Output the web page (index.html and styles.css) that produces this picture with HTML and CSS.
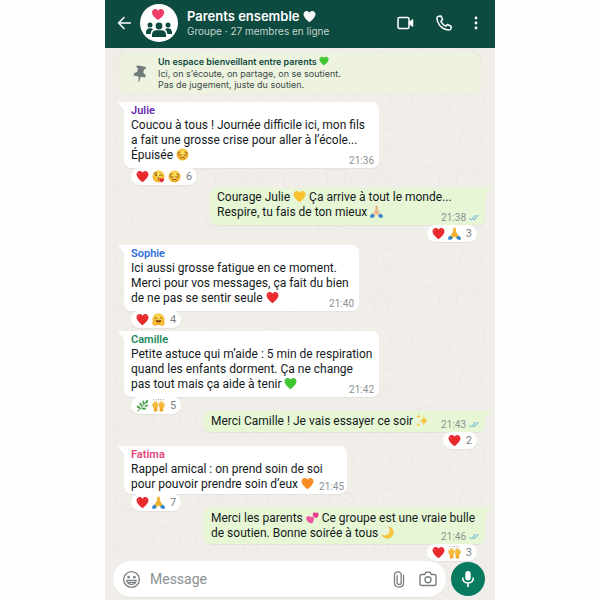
FILE: index.html
```html
<!DOCTYPE html>
<html lang="fr">
<head>
    <meta charset="UTF-8">
    <meta name="viewport" content="width=device-width, initial-scale=1.0">
    <title>Parents ensemble</title>
    <link rel="stylesheet" href="styles.css">
</head>
<body>

    <!-- Emoji and icon sprite -->
    <svg class="sprite" aria-hidden="true">
        <defs>
            <radialGradient id="face" cx="50%" cy="35%" r="65%">
                <stop offset="0" stop-color="#ffe45c"/>
                <stop offset="1" stop-color="#f5a623"/>
            </radialGradient>
            <linearGradient id="hand" x1="0" y1="0" x2="0" y2="1">
                <stop offset="0" stop-color="#ffd54a"/>
                <stop offset="1" stop-color="#f0a020"/>
            </linearGradient>
        </defs>
        <symbol id="heart" viewBox="0 0 24 24">
            <path fill="currentColor" d="M12 22.500C8 19.500 1 14 1 8c0-3.600 2.600-6 5.800-6 2.200 0 4.200 1.200 5.200 3.200C13 3.200 15 2 17.200 2 20.400 2 23 4.400 23 8c0 6-7 11.500-11 14.500z"/>
            <path fill="#fff" opacity=".25" d="M3.500 8c0-2.500 1.800-3.800 3.700-3.500C5.500 5.500 4.800 7.500 5 10c-.8.200-1.500-.8-1.500-2zM15 5.500c2-1.500 4.500-1 5 1-1.500-.8-3.300-.8-5-1z"/>
        </symbol>
        <symbol id="pensive" viewBox="0 0 24 24">
            <circle cx="12" cy="12" r="11" fill="url(#face)"/>
            <path d="M3.500 9.500l4-2M20.500 9.500l-4-2M4.500 12.500q2.500 2 5 .5M19.500 12.500q-2.500 2-5 .5M8.500 18q3.500-2 7 0" fill="none" stroke="#6d4212" stroke-width="1.500" stroke-linecap="round"/>
        </symbol>
        <symbol id="kiss" viewBox="0 0 24 24">
            <circle cx="12" cy="12" r="11" fill="url(#face)"/>
            <ellipse cx="7.500" cy="9.500" rx="1.500" ry="2" fill="#6d4212"/>
            <path d="M4.500 6q2-2 4-1M14 9.500q2-2 4.500 0M11 13.500q3 .5 1.500 2.300q2 1.200-1 2.700" fill="none" stroke="#6d4212" stroke-width="1.500" stroke-linecap="round"/>
            <path fill="#e5253b" d="M18 23c-3-1.500-4.800-4-4-6.200.8-1.800 3-1.800 4-.3 1.200-1.300 3.600-1 4.200.8.700 2.300-1.500 4.500-4.200 5.700z"/>
        </symbol>
        <symbol id="hug" viewBox="0 0 24 24">
            <circle cx="12" cy="11.500" r="11" fill="url(#face)"/>
            <path d="M6 9.500q1.500-2.500 3.500 0M14.500 9.500q1.500-2.500 3.500 0" fill="none" stroke="#6d4212" stroke-width="1.500" stroke-linecap="round"/>
            <path d="M6.500 12.500q5.500 2 11 0q-1 5-5.500 5t-5.500-5z" fill="#80420f"/>
            <path d="M1 17q2-3 3.500-.5Q8 15 8.500 18q2 3-1.500 5Q1 24 1 17zM23 17q-2-3-3.500-.5Q16 15 15.500 18q-2 3 1.500 5Q23 24 23 17z" fill="#ffcb3d" stroke="#df8a12" stroke-width="1"/>
        </symbol>
        <symbol id="herb" viewBox="0 0 24 24">
            <path d="M2.500 22.500Q9 19 13 12.500T20 4" fill="none" stroke="#2e7d32" stroke-width="1.500"/>
            <path fill="#43a047" d="M22 1q1 6-4 8-3-4 4-8zM13 2q4 4 2 8.500-5-2-2-8.500zM7 6q5 2 4.500 8Q5 13 7 6zM1.500 12q6 0 7 6Q2 19 1.500 12zM23 11q-3 5-8 2.500Q17 9 23 11zM19 18q-5 4-9-.5 5-4 9 .5z"/>
        </symbol>
        <symbol id="raised" viewBox="0 0 24 24">
            <path d="M4 2L3 .5M8 1.500V0M12 2V0M16 1.500V0M20 2l1-1.500" stroke="#52677a" stroke-width="1.200"/>
            <path fill="url(#hand)" stroke="#e39a1c" stroke-width=".6" d="M3.500 22.500l.5-5Q.5 14 .8 8.500q1.200-1.200 2 0L3.500 12 4 5q1.200-1.200 2 0l.3 5L7.500 4.500q1.300-.9 2 .3L9 11l1.300-2.500q1.400-.4 1.300 1L9.500 17v5.500z"/>
            <path fill="url(#hand)" stroke="#e39a1c" stroke-width=".6" d="M20.500 22.500l-.5-5q3.500-3.500 3.200-9-1.200-1.200-2 0l-.7 3.500L20 5q-1.200-1.200-2 0l-.3 5-1.200-5.500q-1.300-.9-2 .3L15 11l-1.300-2.500q-1.400-.4-1.300 1l2.100 7.500v5.500z"/>
        </symbol>
        <symbol id="pray" viewBox="0 0 24 24">
            <path fill="currentColor" d="M11.700 1q-1.700-.4-2 1.500L8.500 10 4 17l3.500 4 4.200-3zM12.300 1q1.700-.4 2 1.500L15.500 10l4.500 7-3.500 4-4.200-3z"/>
            <path d="M12 1.500V18M9.300 10.500l-.5 4M14.700 10.500l.5 4" fill="none" stroke="#c5852f" stroke-width=".8"/>
            <path fill="#2f86cf" d="M4.500 15.500L9 20l-3 3.500H.5V19zM19.500 15.500L15 20l3 3.500h5.500V19z"/>
        </symbol>
        <symbol id="sparkles" viewBox="0 0 24 24">
            <path fill="#f8c544" d="M14.500 3Q16 11 23 12.500q-7 1.500-8.500 9-1.500-7.500-8.500-9Q13 11 14.500 3zM5 .5Q5.600 4 9 4.500 5.600 5 5 8.500 4.400 5 1 4.500 4.400 4 5 .5zM4 16q.5 3 3.500 3.500Q4.500 20 4 23.500 3.500 20 .5 19.500 3.500 19 4 16z"/>
        </symbol>
        <symbol id="two-hearts" viewBox="0 0 24 24">
            <path fill="#f0559f" d="M11.500 23C6 22.500 0 19 .5 13.500 1 9 6 8 8 11.500c3-3 7.500-.5 7 3.300-.3 2.700-2 5.200-3.500 8.200z"/>
            <path fill="#e83e8c" d="M20 13c-4-.5-8-3-7.500-7C13 2.500 16.500 1.300 17.800 4c2.200-2.300 6-.5 5.500 3-.3 2.200-2 4-3.300 6z"/>
        </symbol>
        <symbol id="moon" viewBox="0 0 24 24">
            <path fill="#fcc63a" stroke="#eda621" stroke-width=".7" d="M14.500 1Q24 5 22.500 14 20 23 11 22.800 4 22 1.500 16.500 8 20 13.500 15.500 19 9.500 14.500 1z"/>
        </symbol>
        <symbol id="ticks" viewBox="0 0 22 14">
            <path d="M1 8l4 4L13 2M9 11l1 1L19 2" fill="none" stroke="#4dabd8" stroke-width="2"/>
        </symbol>
    </svg>

    <div class="phone">
        <header class="topbar">
            <button class="icon-button" type="button" aria-label="Retour">
                <svg class="icon-back" viewBox="0 0 14 14"><path d="M13.500 7H1.500M7 1.500L1.500 7 7 12.500"/></svg>
            </button>
            <div class="avatar">
                <svg viewBox="0 0 38 38" aria-hidden="true">
                    <path fill="#ee3f67" d="M18 16C14.500 13.500 12 11.300 12 8.500c0-3.500 4.200-4.700 6-1.700 1.800-3 6.200-1.800 6.200 1.700 0 2.800-2.600 5-6.200 7.500z"/>
                    <g fill="#0d4a40">
                        <circle cx="10" cy="21" r="2.500"/>
                        <circle cx="28" cy="21" r="2.500"/>
                        <circle cx="19" cy="22" r="3.400"/>
                        <path d="M6 30v-2q.5-4 4.500-3.700 1.500 0 2.500 1Q10.500 27 10.500 30zM32 30v-2q-.5-4-4.500-3.700-1.500 0-2.500 1 2.500 1.700 2.500 4.700zM12 33v-2.500q.5-4.200 4.500-4.200h5q4 0 4.500 4.200V33z"/>
                    </g>
                </svg>
            </div>
            <div class="group">
                <h1 class="group-name">Parents ensemble <svg class="emoji white" role="img" aria-label="cœur"><use href="#heart"/></svg></h1>
                <p class="group-status">Groupe · 27 membres en ligne</p>
            </div>
            <nav class="actions">
                <button class="icon-button" type="button" aria-label="Appel vidéo">
                    <svg class="icon-video" viewBox="0 0 17 14"><rect x="1" y="1.500" width="11" height="11" rx="1.500"/><path fill="#fff" d="M12.500 6.500L15.500 4v6l-3-2.500z"/></svg>
                </button>
                <button class="icon-button" type="button" aria-label="Appel">
                    <svg class="icon-phone" viewBox="0 0 16 16"><path d="M2.600 1.200L5 .9 6.600 4.800 4.900 6.300Q6.500 9.500 9.800 11.200L11.400 9.500 15.200 11.200 15 13.600Q14.600 15.200 12.500 15.100 7.500 14.500 4 10.700 1.200 7.300.9 3.400 1 1.700 2.600 1.200z"/></svg>
                </button>
                <button class="icon-button" type="button" aria-label="Menu">
                    <svg class="icon-more" viewBox="0 0 4 14"><circle cx="2" cy="2" r="1.400"/><circle cx="2" cy="7" r="1.400"/><circle cx="2" cy="12" r="1.400"/></svg>
                </button>
            </nav>
        </header>

        <main class="chat">
            <section class="pinned">
                <svg class="icon-pin" viewBox="0 0 16 20" aria-hidden="true"><path d="M4.500.5l10.500 2-.7 2.500-1.800.2-.7 4 2.700 2.900-.5 2.600-5.300-1L7 19.500l-1-.2.500-5.900-5.700-1.100.5-2.600 3.600-1.700.8-4L4 3z"/></svg>
                <div>
                    <h2 class="pinned-title">Un espace bienveillant entre parents <svg class="emoji small green" role="img" aria-label="cœur vert"><use href="#heart"/></svg></h2>
                    <p>Ici, on s’écoute, on partage, on se soutient.<br>Pas de jugement, juste du soutien.</p>
                </div>
            </section>

            <article class="message received spaced w-julie">
                <h3 class="author julie">Julie</h3>
                <p>Coucou à tous ! Journée difficile ici, mon fils<br>a fait une grosse crise pour aller à l’école...<br>Épuisée <svg class="emoji" role="img" aria-label="pensif"><use href="#pensive"/></svg></p>
                <div class="meta"><time>21:36</time></div>
                <div class="reactions">
                    <svg class="emoji red" role="img" aria-label="cœur"><use href="#heart"/></svg>
                    <svg class="emoji" role="img" aria-label="bisou"><use href="#kiss"/></svg>
                    <svg class="emoji" role="img" aria-label="pensif"><use href="#pensive"/></svg>
                    <span>6</span>
                </div>
            </article>

            <article class="message sent spaced w-courage">
                <p>Courage Julie <svg class="emoji yellow" role="img" aria-label="cœur jaune"><use href="#heart"/></svg> Ça arrive à tout le monde...<br>Respire, tu fais de ton mieux <svg class="emoji light-skin" role="img" aria-label="mains jointes"><use href="#pray"/></svg></p>
                <div class="meta"><time>21:38</time><svg class="ticks" role="img" aria-label="lu"><use href="#ticks"/></svg></div>
                <div class="reactions">
                    <svg class="emoji red" role="img" aria-label="cœur"><use href="#heart"/></svg>
                    <svg class="emoji skin" role="img" aria-label="mains jointes"><use href="#pray"/></svg>
                    <span>3</span>
                </div>
            </article>

            <article class="message received spaced w-sophie">
                <h3 class="author sophie">Sophie</h3>
                <p>Ici aussi grosse fatigue en ce moment.<br>Merci pour vos messages, ça fait du bien<br>de ne pas se sentir seule <svg class="emoji red" role="img" aria-label="cœur"><use href="#heart"/></svg></p>
                <div class="meta"><time>21:40</time></div>
                <div class="reactions">
                    <svg class="emoji red" role="img" aria-label="cœur"><use href="#heart"/></svg>
                    <svg class="emoji" role="img" aria-label="câlin"><use href="#hug"/></svg>
                    <span>4</span>
                </div>
            </article>

            <article class="message received w-julie">
                <h3 class="author camille">Camille</h3>
                <p>Petite astuce qui m’aide : 5 min de respiration<br>quand les enfants dorment. Ça ne change<br>pas tout mais ça aide à tenir <svg class="emoji green" role="img" aria-label="cœur vert"><use href="#heart"/></svg></p>
                <div class="meta"><time>21:42</time></div>
                <div class="reactions">
                    <svg class="emoji" role="img" aria-label="feuilles"><use href="#herb"/></svg>
                    <svg class="emoji" role="img" aria-label="mains levées"><use href="#raised"/></svg>
                    <span>5</span>
                </div>
            </article>

            <article class="message sent compact w-merci">
                <p>Merci Camille ! Je vais essayer ce soir <svg class="emoji" role="img" aria-label="étincelles"><use href="#sparkles"/></svg></p>
                <div class="meta"><time>21:43</time><svg class="ticks" role="img" aria-label="lu"><use href="#ticks"/></svg></div>
                <div class="reactions">
                    <svg class="emoji red" role="img" aria-label="cœur"><use href="#heart"/></svg>
                    <span>2</span>
                </div>
            </article>

            <article class="message received short w-fatima">
                <h3 class="author fatima">Fatima</h3>
                <p>Rappel amical : on prend soin de soi<br>pour pouvoir prendre soin d’eux <svg class="emoji orange" role="img" aria-label="cœur orange"><use href="#heart"/></svg></p>
                <div class="meta"><time>21:45</time></div>
                <div class="reactions">
                    <svg class="emoji red" role="img" aria-label="cœur"><use href="#heart"/></svg>
                    <svg class="emoji skin" role="img" aria-label="mains jointes"><use href="#pray"/></svg>
                    <span>7</span>
                </div>
            </article>

            <article class="message sent compact w-merci">
                <p>Merci les parents <svg class="emoji" role="img" aria-label="deux cœurs"><use href="#two-hearts"/></svg> Ce groupe est une vraie bulle<br>de soutien. Bonne soirée à tous <svg class="emoji" role="img" aria-label="lune"><use href="#moon"/></svg></p>
                <div class="meta"><time>21:46</time><svg class="ticks" role="img" aria-label="lu"><use href="#ticks"/></svg></div>
                <div class="reactions">
                    <svg class="emoji red" role="img" aria-label="cœur"><use href="#heart"/></svg>
                    <svg class="emoji" role="img" aria-label="mains levées"><use href="#raised"/></svg>
                    <span>3</span>
                </div>
            </article>
        </main>

        <form class="composer">
            <div class="field">
                <button class="icon-button" type="button" aria-label="Emoji">
                    <svg class="icon-smile" viewBox="0 0 20 20"><circle cx="10" cy="10" r="8.300"/><circle class="dot" cx="7" cy="7.500" r="1.400"/><circle class="dot" cx="13" cy="7.500" r="1.400"/><path d="M5 11h10q-1 4.200-5 4.200T5 11zM7 13h6"/></svg>
                </button>
                <input class="input" type="text" placeholder="Message" aria-label="Message">
                <button class="icon-button" type="button" aria-label="Joindre">
                    <svg class="icon-clip" viewBox="0 0 12 18"><path d="M10.800 4.500v8q0 4.500-4.800 4.500t-4.800-4.500V4.500Q1.200 1 4.800 1t3.500 3.500v7.700q0 2.100-2.200 2.100T4 12.200V5"/></svg>
                </button>
                <button class="icon-button" type="button" aria-label="Photo">
                    <svg class="icon-camera" viewBox="0 0 18 16"><path d="M2.500 3.500h3L7 1.200h4l1.500 2.300h3q1.500 0 1.500 1.500v8q0 1.500-1.500 1.500h-13Q1 14.500 1 13V5q0-1.500 1.500-1.500z"/><circle cx="9" cy="8.800" r="3"/></svg>
                </button>
            </div>
            <button class="mic" type="button" aria-label="Message vocal">
                <svg viewBox="0 0 14 18"><rect x="4.300" y="1" width="5.400" height="9.500" rx="2.700" fill="#fff"/><path d="M1.800 7.500v.8Q2 13 7 13t5.200-4.700v-.8M7 13v4" fill="none" stroke="#fff" stroke-width="1.600"/></svg>
            </button>
        </form>
    </div>

</body>
</html>
```
FILE: styles.css
```css
* {
    box-sizing: border-box;
}
body {
    margin: 0;
    background-color: #fdfdfd;
    font-family: Roboto, 'Liberation Sans', sans-serif;
    color: #151a1c;
}
h1, h2, h3, p {
    margin: 0;
}
.sprite {
    position: absolute;
    width: 0;
    height: 0;
}
.phone {
    display: flex;
    flex-direction: column;
    width: 100%;
    max-width: 390px;
    min-height: 100vh;
    margin: 0 auto;
    background-color: #f1eee9;
    background-image: url("data:image/svg+xml,%3Csvg xmlns='http://www.w3.org/2000/svg' width='130' height='120' fill='none' stroke='%23ebe7e2'%3E%3Ccircle cx='22' cy='20' r='11'/%3E%3Cpath d='M17 23q5 5 10 0M18 17v1M26 17v1M60 14q5-8 9 0 5-7 9 0 1 6-10 12-10-6-8-12zM97 10l22 5-4 15-22-5zM97 10l9 12 13-7M12 58l4-9 4 9 9 1-7 6 2 9-8-5-8 5 2-9-7-6zM52 50q12-8 20 2t-6 20q-14 3-17-8t3-14zM92 50h18v16q-9 8-18 0zM110 54q8 0 6 6t-6 4M25 96q8-14 18-5t-3 18q-12 3-15-13zM76 90l5 9 10 2-8 6 1 10-8-5M112 84q10 5 7 16t-14 7 7-23'/%3E%3C/svg%3E");
}
.emoji {
    width: 13px;
    height: 13px;
    vertical-align: -2px;
}
.emoji.small {
    width: 10px;
    height: 10px;
    vertical-align: -1px;
}
.red { color: #e8292d; }
.green { color: #3fc52f; }
.yellow { color: #fbc02d; }
.orange { color: #f88b1f; }
.white { color: #f7f7f5; }
.skin { color: #fbb829; }
.light-skin { color: #f3c9a9; }

.icon-button {
    display: flex;
    align-items: center;
    justify-content: center;
    padding: 0;
    border: none;
    background: none;
    cursor: pointer;
}
.icon-button svg {
    fill: none;
    stroke-linecap: round;
    stroke-linejoin: round;
}

/* Header */
.topbar {
    display: flex;
    align-items: center;
    height: 48px;
    padding: 0 17px 2px 12px;
    background-color: #0d4a40;
    color: #fff;
    font-family: Inter, 'Liberation Sans', sans-serif;
}
.topbar svg {
    stroke: #fff;
    stroke-width: 1.5;
}
.topbar .icon-more {
    width: 4px;
    height: 14px;
    fill: #fff;
    stroke: none;
}
.icon-back {
    width: 14px;
    height: 14px;
}
.avatar {
    width: 38px;
    height: 38px;
    margin: 0 9px;
    border-radius: 50%;
    background-color: #fff;
}
.topbar .avatar svg, .topbar .emoji {
    stroke: none;
}
.group {
    flex: 1;
    white-space: nowrap;
}
.group-name {
    font-size: 13px;
    line-height: 16px;
    font-weight: 600;
}
.group-status {
    font-size: 10px;
    line-height: 15px;
    color: #c3d5cf;
}
.actions {
    display: flex;
    align-items: center;
    gap: 22px;
}
.icon-video {
    width: 17px;
    height: 14px;
}
.icon-phone {
    width: 16px;
    height: 16px;
}

/* Conversation */
.chat {
    display: flex;
    flex-direction: column;
    padding: 5px 10px 17px 19px;
}
.pinned {
    display: flex;
    align-items: center;
    gap: 11px;
    margin: 0 4px 8px -5px;
    padding: 3px 14px 4px;
    border-radius: 8px;
    background-color: #edf3df;
    box-shadow: 0 0 1px #cfd5c4;
    font-family: Inter, 'Liberation Sans', sans-serif;
    font-size: 9px;
    line-height: 11px;
    color: #3b4a47;
}
.pinned-title {
    font-size: 9px;
    line-height: 12px;
    font-weight: 600;
    color: #0f4a41;
}
.icon-pin {
    width: 14px;
    height: 19px;
    fill: #727b7c;
}
.message {
    position: relative;
    max-width: 100%;
    margin-bottom: 14px;
    padding: 2px 7px 5px;
    border-radius: 7px;
    box-shadow: 0 1px 1px rgba(0, 0, 0, 0.05);
    font-size: 12px;
    line-height: 15px;
    white-space: nowrap;
}
.message::before {
    content: "";
    position: absolute;
    top: 0;
    width: 12px;
    height: 8px;
    background-color: inherit;
}
.message:last-child {
    margin-bottom: 0;
}
.received {
    align-self: flex-start;
    border-top-left-radius: 0;
    background-color: #fff;
}
.received::before {
    left: -6px;
    clip-path: polygon(0 0, 100% 0, 50% 100%);
}
.sent {
    align-self: flex-end;
    border-top-right-radius: 0;
    background-color: #e7f7d5;
}
.sent::before {
    right: -6px;
    clip-path: polygon(0 0, 100% 0, 50% 100%);
}
.spaced {
    margin-bottom: 20px;
}
.short {
    padding-bottom: 2px;
}
.compact {
    padding-top: 3px;
    padding-bottom: 3px;
}
.w-julie { width: 255px; }
.w-courage { width: 275px; }
.w-sophie { width: 235px; }
.w-merci { width: 281px; }
.w-fatima { width: 223px; }

.author {
    font-size: 11px;
    line-height: 14px;
    font-weight: 600;
}
.julie { color: #6a2bb0; }
.sophie { color: #2f6fd6; }
.camille { color: #1b8a5a; }
.fatima { color: #e8457a; }

.meta {
    position: absolute;
    right: 5px;
    bottom: 1px;
    display: flex;
    align-items: center;
    gap: 3px;
    font-size: 10px;
    line-height: 13px;
    color: #8a9090;
}
.short .meta {
    right: 3px;
}
.ticks {
    width: 11px;
    height: 7px;
}
.reactions {
    position: absolute;
    top: 100%;
    left: 7px;
    display: flex;
    align-items: center;
    gap: 3px;
    height: 17px;
    padding: 0 5px;
    border-radius: 9px;
    background-color: #fff;
    box-shadow: 0 1px 1px rgba(0, 0, 0, 0.06);
    font-size: 11px;
    line-height: 13px;
    color: #7c8284;
}
.reactions span {
    margin-left: 2px;
}
.sent .reactions {
    right: 8px;
    left: auto;
}

/* Message box */
.composer {
    display: flex;
    align-items: center;
    gap: 5px;
    margin-top: auto;
    padding: 0 10px 4px 8px;
}
.field {
    display: flex;
    flex: 1;
    align-items: center;
    gap: 14px;
    height: 36px;
    padding: 0 9px;
    border-radius: 18px;
    background-color: #fff;
    box-shadow: 0 1px 1px rgba(0, 0, 0, 0.06);
}
.field svg {
    stroke: #7b8083;
    stroke-width: 1.4;
}
.field .dot {
    fill: #7b8083;
    stroke: none;
}
.icon-smile {
    width: 19px;
    height: 19px;
}
.icon-clip {
    width: 12px;
    height: 17px;
}
.icon-camera {
    width: 18px;
    height: 16px;
}
.input {
    flex: 1;
    min-width: 0;
    margin-left: -5px;
    padding: 0;
    border: none;
    outline: none;
    background: none;
    font-family: inherit;
    font-size: 14px;
    color: #151a1c;
}
.input::placeholder {
    color: #8b9092;
}
.mic {
    display: flex;
    align-items: center;
    justify-content: center;
    width: 34px;
    height: 34px;
    padding: 0;
    border: none;
    border-radius: 50%;
    background-color: #087a60;
    cursor: pointer;
}
.mic svg {
    width: 14px;
    height: 18px;
}
```
